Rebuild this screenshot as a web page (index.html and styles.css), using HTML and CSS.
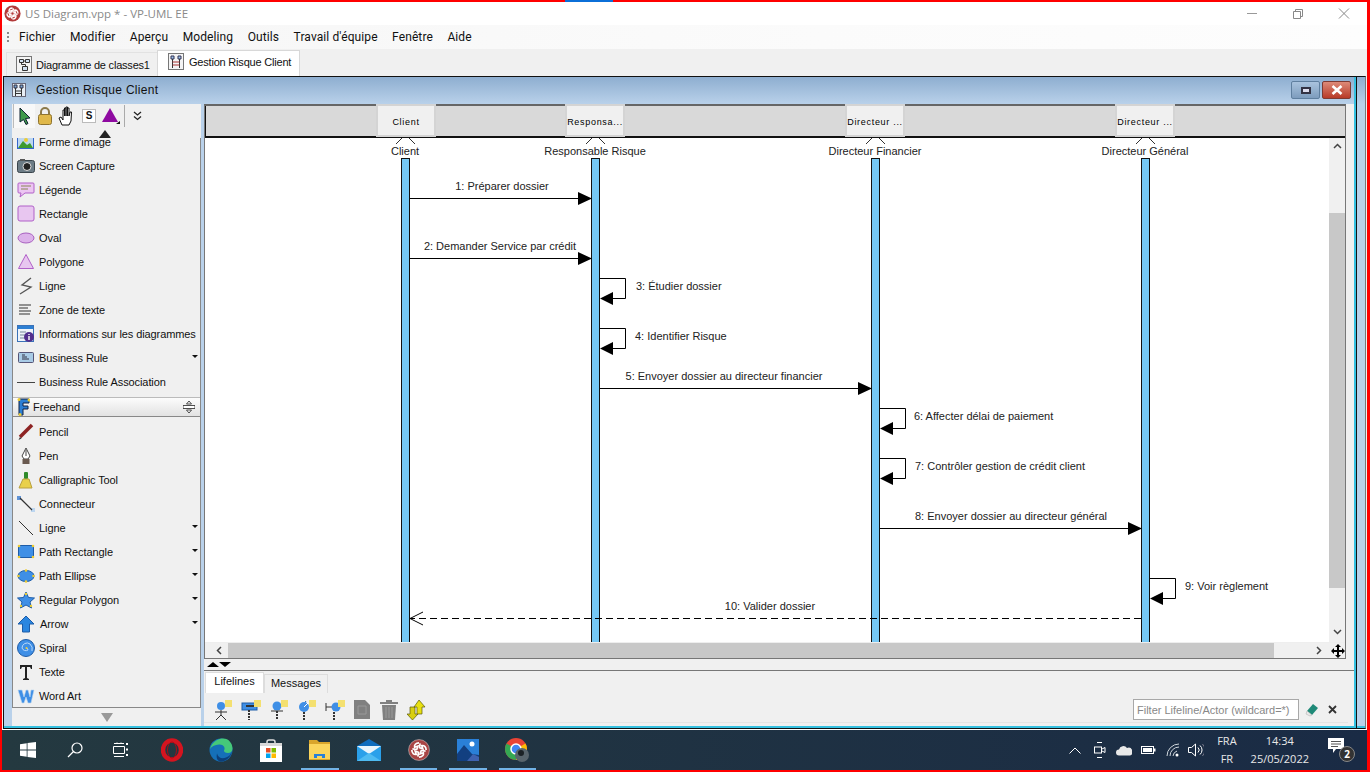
FILE: index.html
```html
<!DOCTYPE html>
<html lang="fr">
<head>
  <meta charset="UTF-8">
  <title>US Diagram.vpp * - VP-UML EE</title>
  <link rel="stylesheet" href="styles.css">
</head>
<body>
<div class="screen">
  <div class="top-mark"></div>

  <div class="titlebar">
    <svg class="app-logo" width="17" height="17" viewBox="0 0 20 20"><circle cx="10" cy="10" r="9.5" fill="#b23a3a"/><path d="M10 3.500c-3 0-4.500 2-4 4l3-1-1 3-4-.5M16.500 10c0-3-2-4.500-4-4l1 3-3-1 .5-4M10 16.500c3 0 4.500-2 4-4l-3 1 1-3 4 .5M3.500 10c0 3 2 4.500 4 4l-1-3 3 1-.5 4" fill="none" stroke="#fff" stroke-width="1.600"/></svg>
    <span class="app-title">US Diagram.vpp * - VP-UML EE</span>
    <div class="win-btns">
      <svg width="46" height="24" viewBox="0 0 46 24"><path d="M18 12.500h10" stroke="#999"/></svg>
      <svg width="46" height="24" viewBox="0 0 46 24"><path d="M18.500 10.500h7v7h-7zM20.500 10.500v-2h7v7h-2" fill="none" stroke="#888"/></svg>
      <svg width="46" height="24" viewBox="0 0 46 24"><path d="M18 7.500l10 10M28 7.500l-10 10" stroke="#888"/></svg>
    </div>
  </div>

  <div class="menubar">
    <span class="grip"></span>
    <span>Fichier</span>
    <span>Modifier</span>
    <span>Aperçu</span>
    <span>Modeling</span>
    <span>Outils</span>
    <span>Travail d'équipe</span>
    <span>Fenêtre</span>
    <span>Aide</span>
  </div>

  <div class="tabbar">
    <div class="doc-tab">
      <svg width="18" height="18" viewBox="0 0 18 18"><rect x=".5" y=".5" width="15" height="16" fill="#f4f4f4" stroke="#777"/><path d="M3.500 3.500h4v3h-4zM9.500 3.500h4v3h-4zM6.500 10.500h5v4h-5z" fill="#cfe0f2" stroke="#333"/><path d="M7.500 5h2M5.500 6.500v2h4v2" fill="none" stroke="#333"/></svg>
      Diagramme de classes1
    </div>
    <div class="doc-tab active">
      <svg width="18" height="18" viewBox="0 0 18 18"><rect x=".5" y=".5" width="15" height="16" fill="#f4f4f4" stroke="#777"/><path d="M3 3h3v3H3zM10 3h3v3h-3z" fill="#9dc3e8" stroke="#335"/><path d="M4.500 6v9M11.500 6v9" stroke="#333"/><path d="M4.500 9h7M4.500 12h7" stroke="#a33"/></svg>
      Gestion Risque Client
    </div>
  </div>

  <div class="window">
    <div class="frame">
      <div class="win-head">
        <svg width="14" height="14" viewBox="0 0 14 14"><rect x=".5" y=".5" width="13" height="13" fill="#e8eef5" stroke="#667"/><path d="M2 2h3v3H2zM8 2h3v3H8z" fill="#7aa6d6" stroke="#334"/><path d="M3.500 5v8M9.500 5v8M3.500 8h6M3.500 10.500h6" stroke="#333"/></svg>
        <span class="win-name">Gestion Risque Client</span>
        <div class="head-btn"><i></i></div>
        <div class="head-btn close">
          <svg width="14" height="10" viewBox="0 0 14 10"><path d="M2.500 1l9 8M11.500 1l-9 8" stroke="#fff" stroke-width="2.600"/></svg>
        </div>
      </div>

      <div class="win-body">
        <div class="palette">
          <div class="pal-tools">
            <div class="tool on"><svg width="14" height="18" viewBox="0 0 14 18"><path d="M2 1l10 10-4.500.5 2.500 5-2 1-2.500-5L2 15z" fill="#3f9a4a" stroke="#123"/></svg></div>
            <svg class="tool t-lock" width="16" height="20" viewBox="0 0 16 20"><path d="M4 9V6a4 4 0 0 1 8 0v3" fill="none" stroke="#8c7a4a" stroke-width="2"/><rect x="1.500" y="8.500" width="13" height="10" rx="2" fill="#e0b84a" stroke="#8f7430"/></svg>
            <svg class="tool t-hand" width="18" height="20" viewBox="0 0 18 20"><path d="M4 19l-3-7 2-1 2 3V4h1.500v6-8H8v8-9h1.500v9-8H11v8l1-4h1.500L13 15l-2 4z" fill="#fff" stroke="#111" stroke-linejoin="round"/></svg>
            <div class="tool snap">S</div>
            <div class="tool shape"><svg width="18" height="18" viewBox="0 0 18 18"><path d="M8 1l8 14H0z" fill="#8e0aa0"/><path d="M14 17l4-3v3z" fill="#111"/></svg></div>
            <svg class="tool more" width="9" height="10" viewBox="0 0 9 10"><path d="M1 1l3.500 3L8 1M1 5.500l3.500 3 3.500-3" fill="none" stroke="#222" stroke-width="1.300"/></svg>
          </div>
          <div class="pal-tri"></div>

          <div class="pal-list">
            <div class="clip-top">
              <div class="pal-item"><svg width="18" height="18" viewBox="0 0 18 18"><rect x=".5" y="2.500" width="16" height="13" fill="#bcd6f0" stroke="#36c"/><path d="M1 15l5-7 4 4 3-2 3 5z" fill="#3d9a30"/><circle cx="9" cy="7" r="2" fill="#ec3"/></svg>Forme d'image</div>
              <div class="pal-item"><svg width="18" height="18" viewBox="0 0 18 18"><rect x=".5" y="3.500" width="17" height="12" rx="2" fill="#6c7c86" stroke="#3a454c"/><rect x="3" y="2" width="5" height="2" fill="#555"/><circle cx="10" cy="9.500" r="4" fill="#222" stroke="#ddd"/></svg>Screen Capture</div>
              <div class="pal-item"><svg width="18" height="18" viewBox="0 0 18 18"><path d="M2 2h14a1 1 0 0 1 1 1v8a1 1 0 0 1-1 1H8l-5 4 1-4H2a1 1 0 0 1-1-1V3a1 1 0 0 1 1-1z" fill="#ecc6f2" stroke="#b060c8"/><path d="M4 5h10M4 8h7" stroke="#885"/></svg>Légende</div>
              <div class="pal-item"><svg width="18" height="18" viewBox="0 0 18 18"><rect x="1" y="1" width="16" height="15" rx="2" fill="#e8c6f0" stroke="#b060c8"/></svg>Rectangle</div>
              <div class="pal-item"><svg width="18" height="18" viewBox="0 0 18 18"><ellipse cx="9" cy="9" rx="8" ry="5" fill="#dcb2ea" stroke="#a860c0"/></svg>Oval</div>
              <div class="pal-item"><svg width="18" height="18" viewBox="0 0 18 18"><path d="M9 1.500l7.500 14h-15z" fill="#e8c6f0" stroke="#b060c8"/></svg>Polygone</div>
              <div class="pal-item"><svg width="18" height="18" viewBox="0 0 18 18"><path d="M14 1L5 8l9 2-11 7" fill="none" stroke="#555" stroke-width="1.300"/></svg>Ligne</div>
              <div class="pal-item"><svg width="18" height="18" viewBox="0 0 18 18"><path d="M2 4h12M2 7h9M2 10h12M2 13h11" stroke="#333" stroke-width="1.200"/></svg>Zone de texte</div>
              <div class="pal-item"><svg width="18" height="18" viewBox="0 0 18 18"><rect x=".5" y=".5" width="16" height="16" fill="#eef3fa" stroke="#3a72b8"/><rect x="1" y="1" width="15" height="3" fill="#2d7fd3"/><path d="M3 7h6M3 10h5M3 13h5" stroke="#789"/><circle cx="12" cy="12" r="5" fill="#52308e"/><path d="M12 11v4M12 9v1" stroke="#fff" stroke-width="1.400"/></svg>Informations sur les diagrammes</div>
              <div class="pal-item"><svg width="18" height="18" viewBox="0 0 18 18"><rect x="1.500" y="3.500" width="15" height="10" rx="1" fill="#a9cbe6" stroke="#557"/><path d="M5 6h3M5 8h5M5 10h7" stroke="#334"/></svg>Business Rule<i class="caret"></i></div>
              <div class="pal-item"><svg width="18" height="18" viewBox="0 0 18 18"><path d="M0 9.500h18" stroke="#444"/></svg>Business Rule Association</div>
            </div>

            <div class="pal-group">
              <svg width="13" height="18" viewBox="0 0 13 18"><path d="M2 1h10v4H6v3h5v3H6v6H2z" fill="#2d7fd3" stroke="#124"/><circle cx="2" cy="1.500" r="1.500" fill="#ec3"/><circle cx="12" cy="2" r="1.500" fill="#ec3"/><circle cx="3" cy="16.500" r="1.500" fill="#ec3"/></svg>
              <span>Freehand</span>
              <svg class="grp-move" width="12" height="12" viewBox="0 0 12 12"><path d="M0 4.500h12v3H0zM6 0l2.500 3h-5zM6 12l2.500-3h-5z" fill="#fff" stroke="#222" stroke-width=".8"/></svg>
            </div>

            <div class="pal-rest">
              <div class="pal-item"><svg width="18" height="18" viewBox="0 0 18 18"><path d="M15 2L3 14" stroke="#8d2323" stroke-width="3.500"/><path d="M3 14l-1.500 3 3-1.500z" fill="#333"/></svg>Pencil</div>
              <div class="pal-item"><svg width="18" height="18" viewBox="0 0 18 18"><path d="M9 1l4 8-2 3H7L5 9z" fill="#fff" stroke="#444"/><path d="M9 3v6" stroke="#444"/><rect x="5.500" y="12" width="7" height="5" fill="#6a5a50"/></svg>Pen</div>
              <div class="pal-item"><svg width="18" height="18" viewBox="0 0 18 18"><rect x="7" y="1" width="4" height="7" rx="1" fill="#2f8a2a"/><path d="M6 8h6l3 9H2z" fill="#e9d04a" stroke="#b9a040"/></svg>Calligraphic Tool</div>
              <div class="pal-item"><svg width="18" height="18" viewBox="0 0 18 18"><rect y="1" width="4" height="4" fill="#5f93d6"/><rect x="14" y="13" width="4" height="4" fill="#bcd6f0"/><path d="M3 3l12 12" stroke="#333" stroke-width="1.200"/></svg>Connecteur</div>
              <div class="pal-item"><svg width="18" height="18" viewBox="0 0 18 18"><path d="M2 2l14 14" stroke="#333"/></svg>Ligne<i class="caret"></i></div>
              <div class="pal-item"><svg width="18" height="18" viewBox="0 0 18 18"><rect x="1.500" y="2.500" width="15" height="12" fill="#3f8fe6" stroke="#1d5ca8"/><g fill="#ec3"><circle cx="2" cy="3" r="1.300"/><circle cx="16" cy="3" r="1.300"/><circle cx="2" cy="14" r="1.300"/><circle cx="16" cy="14" r="1.300"/></g></svg>Path Rectangle<i class="caret"></i></div>
              <div class="pal-item"><svg width="18" height="18" viewBox="0 0 18 18"><ellipse cx="9" cy="9" rx="8" ry="5.500" fill="#3f8fe6" stroke="#1d5ca8"/><g fill="#ec3"><circle cx="1.500" cy="9" r="1.300"/><circle cx="16.500" cy="9" r="1.300"/><circle cx="9" cy="3.500" r="1.300"/><circle cx="9" cy="14.500" r="1.300"/></g></svg>Path Ellipse<i class="caret"></i></div>
              <div class="pal-item"><svg width="18" height="18" viewBox="0 0 18 18"><path d="M9 1l2.500 5.500 6 .5-4.500 4 1.500 6L9 14l-5.500 3L5 11 .5 7l6-.5z" fill="#3f8fe6" stroke="#1d5ca8"/><g fill="#ec3"><circle cx="9" cy="3" r="1.200"/><circle cx="4" cy="15" r="1.200"/><circle cx="14" cy="15" r="1.200"/></g></svg>Regular Polygon<i class="caret"></i></div>
              <div class="pal-item arrow-item"><svg width="18" height="18" viewBox="0 0 18 18"><path d="M9 1l8 8h-4.500v8h-7V9H1z" fill="#2a86e0" stroke="#1d5ca8"/></svg>Arrow<i class="caret"></i></div>
              <div class="pal-item"><svg width="18" height="18" viewBox="0 0 18 18"><circle cx="9" cy="9" r="8.500" fill="#3f8fe6" stroke="#1d5ca8"/><path d="M9 9a2 2 0 0 1 2 2 4 4 0 0 1-6-2 5 5 0 0 1 8-4 7 7 0 0 1 2 7" fill="none" stroke="#b8d8fa"/><circle cx="9.500" cy="9" r="1" fill="#ec3"/></svg>Spiral</div>
              <div class="pal-item"><svg width="18" height="18" viewBox="0 0 18 18"><path d="M3 2h12v4h-1l-1-2h-3v11l2 1v1H6v-1l2-1V4H5L4 6H3z" fill="#222"/></svg>Texte</div>
              <div class="pal-item"><svg width="18" height="18" viewBox="0 0 18 18"><path d="M1 3h4l2 7 2-7h2l2 7 1-7h3l-3 13h-3l-2-6-2 6H5z" fill="#3f8fe6" stroke="#bcd6f0" stroke-width=".6"/></svg>Word Art</div>
            </div>
          </div>

          <div class="pal-down"></div>
        </div>

        <div class="editor">
          <div class="diagram-box">
            <div class="life-header">
              <div class="head-node" style="left: 170px">Client</div>
              <div class="head-node" style="left: 359px">Responsa...</div>
              <div class="head-node" style="left: 639px">Directeur ...</div>
              <div class="head-node" style="left: 909px">Directeur ...</div>
            </div>
            <div class="canvas-row">
              <svg class="diagram" width="1124" height="504" viewBox="205 138 1124 504">
                <g class="stick">
                  <path d="M396 144l6-6M409 138l6 6M586 144l6-6M599 138l6 6M866 144l6-6M879 138l6 6M1136 144l6-6M1149 138l6 6"/>
                </g>
                <g class="names">
                  <text x="405" y="155">Client</text>
                  <text x="595" y="155">Responsable Risque</text>
                  <text x="875" y="155">Directeur Financier</text>
                  <text x="1145" y="155">Directeur Général</text>
                </g>
                <g class="lifeline">
                  <rect x="401.500" y="158.500" width="8" height="490"/>
                  <rect x="591.500" y="158.500" width="8" height="490"/>
                  <rect x="871.500" y="158.500" width="8" height="490"/>
                  <rect x="1141.500" y="158.500" width="8" height="490"/>
                </g>
                <g class="msg">
                  <path d="M410 198.500h168M410 258.500h168M600 388.500h258M880 528.500h248"/>
                  <path d="M600 278.500h25.500v20H612M600 328.500h25.500v20H612M880 408.500h25.500v20H892M880 458.500h25.500v20H892M1150 578.500h25.500v20H1162"/>
                  <path class="dash" d="M1141 618.500H410"/>
                  <path d="M423 612l-13 6.500 13 6.500"/>
                </g>
                <g class="heads">
                  <path d="M592 198.500l-14-6.500v13zM592 258.500l-14-6.500v13zM872 388.500l-14-6.500v13zM1142 528.500l-14-6.500v13z"/>
                  <path d="M600 298.500l13-6.500v13zM600 348.500l13-6.500v13zM880 428.500l13-6.500v13zM880 478.500l13-6.500v13zM1150 598.500l13-6.500v13z"/>
                </g>
                <g class="labels">
                  <text class="mid" x="502" y="190">1: Préparer dossier</text>
                  <text class="mid" x="500" y="250">2: Demander Service par crédit</text>
                  <text x="636" y="290">3: Étudier dossier</text>
                  <text x="635" y="340">4: Identifier Risque</text>
                  <text class="mid" x="724" y="380">5: Envoyer dossier au directeur financier</text>
                  <text x="914" y="420">6: Affecter délai de paiement</text>
                  <text x="915" y="470">7: Contrôler gestion de crédit client</text>
                  <text class="mid" x="1011" y="520">8: Envoyer dossier au directeur général</text>
                  <text x="1185" y="590">9: Voir règlement</text>
                  <text class="mid" x="770" y="610">10: Valider dossier</text>
                </g>
              </svg>
              <div class="vscroll">
                <svg width="9" height="6" viewBox="0 0 9 6"><path d="M1 5l3.500-3.500L8 5" fill="none" stroke="#444" stroke-width="1.500"/></svg>
                <div class="vthumb"></div>
                <svg width="9" height="6" viewBox="0 0 9 6"><path d="M1 1l3.500 3.500L8 1" fill="none" stroke="#444" stroke-width="1.500"/></svg>
              </div>
            </div>
            <div class="hscroll">
              <svg width="6" height="9" viewBox="0 0 6 9"><path d="M5 1L1.500 4.500 5 8" fill="none" stroke="#444" stroke-width="1.500"/></svg>
              <div class="hthumb"></div>
              <svg width="6" height="9" viewBox="0 0 6 9"><path d="M1 1l3.500 3.500L1 8" fill="none" stroke="#444" stroke-width="1.500"/></svg>
              <svg class="corner" width="14" height="14" viewBox="0 0 14 14"><path d="M7 0l3 3H8v3h3V4l3 3-3 3V8H8v3h2l-3 3-3-3h2V8H3v2L0 7l3-3v2h3V3H4z" fill="#000"/></svg>
            </div>
          </div>

          <div class="splitter"><i class="up"></i><i class="down"></i></div>

          <div class="bottom-tabs">
            <div class="b-tab active">Lifelines</div>
            <div class="b-tab">Messages</div>
          </div>

          <div class="bottom-tools">
            <svg class="b-ico" width="20" height="20" viewBox="0 0 20 20"><circle cx="8" cy="6" r="4" fill="#3f8fe6"/><path d="M8 10v5M2 12h12M8 15l-5 5M8 15l5 5" stroke="#333"/><rect x="12" y="0" width="7" height="7" fill="#f4e070"/></svg>
            <svg class="b-ico" width="20" height="20" viewBox="0 0 20 20"><rect x="1" y="3" width="15" height="7" fill="#3f8fe6" stroke="#1d5ca8"/><path d="M5 6h8" stroke="#333" stroke-width="2"/><path d="M8 10v10" stroke="#333" stroke-width="2" stroke-dasharray="2 1"/><rect x="13" y="0" width="7" height="7" fill="#f4e070"/></svg>
            <svg class="b-ico" width="20" height="20" viewBox="0 0 20 20"><circle cx="8" cy="6" r="4.500" fill="#3f8fe6"/><path d="M2 11h12" stroke="#333"/><path d="M8 11v9" stroke="#333" stroke-width="2" stroke-dasharray="2 1"/><rect x="12" y="0" width="7" height="7" fill="#f4e070"/></svg>
            <svg class="b-ico" width="20" height="20" viewBox="0 0 20 20"><path d="M9 1l-2 3" stroke="#1d5ca8"/><circle cx="7" cy="7" r="5" fill="#3f8fe6"/><path d="M7 7l4-4" stroke="#fff"/><path d="M7 12v8" stroke="#333" stroke-width="2" stroke-dasharray="2 1"/><rect x="12" y="0" width="7" height="7" fill="#f4e070"/></svg>
            <svg class="b-ico" width="20" height="20" viewBox="0 0 20 20"><path d="M1 3v8M1 7h6" stroke="#333"/><circle cx="11" cy="7" r="4.500" fill="#3f8fe6"/><path d="M9 12v8" stroke="#333" stroke-width="2" stroke-dasharray="2 1"/><rect x="13" y="0" width="7" height="7" fill="#f4e070"/></svg>
            <svg class="b-ico" width="18" height="21" viewBox="0 0 18 21"><path d="M1 1h11l5 5v14H1z" fill="#808080"/><path d="M5 7h8v8H5z" fill="none" stroke="#999"/></svg>
            <svg class="b-ico" width="20" height="21" viewBox="0 0 20 21"><path d="M1 3h18v2H1zM7 1h6v2H7z" fill="#808080"/><path d="M3 6h14l-1 15H4z" fill="#808080"/><path d="M7 8v11M10 8v11M13 8v11" stroke="#9a9a9a"/></svg>
            <svg class="b-ico" width="20" height="20" viewBox="0 0 20 20"><path d="M3 7h5v7h3l-5.500 6L0 14h3z" fill="#d8cf10" stroke="#5c5a08" stroke-width=".7"/><path d="M12 0l6 7h-3v7h-5V7H7z" fill="#e8e010" stroke="#5c5a08" stroke-width=".7"/></svg>
            <div class="filter">Filter Lifeline/Actor (wildcard=*)</div>
            <svg class="erase" width="14" height="14" viewBox="0 0 14 14"><path d="M8 1l5 4-6 7-5-4z" fill="#1f8a78"/><path d="M2 8l5 4-2 1-4-2z" fill="#e8e8e8" stroke="#aaa" stroke-width=".5"/></svg>
            <svg class="clear" width="9" height="9" viewBox="0 0 9 9"><path d="M1 1l7 7M8 1L1 8" stroke="#333" stroke-width="1.800"/></svg>
          </div>
        </div>
      </div>
    </div>
  </div>

  <div class="taskbar">
    <div class="tb-btn small"><svg width="16" height="16" viewBox="0 0 16 16"><path d="M0 2.200l6.700-1v6.400H0zM7.500 1.100L16 0v7.600H7.500zM0 8.400h6.700v6.400l-6.700-1zM7.500 8.400H16V16l-8.500-1.100z" fill="#fff"/></svg></div>
    <div class="tb-btn small"><svg width="16" height="16" viewBox="0 0 16 16"><circle cx="10" cy="6" r="5" fill="none" stroke="#fff" stroke-width="1.200"/><path d="M6.500 9.500L1 15" stroke="#fff" stroke-width="1.200"/></svg></div>
    <div class="tb-btn small"><svg width="16" height="16" viewBox="0 0 16 16"><path d="M.5 4.500h11v7H.5zM1 1.500h10M1 14.500h10M4 .5v1M8 .5v1" fill="none" stroke="#fff"/><rect x="13" y="1" width="2" height="2" fill="#fff"/><rect x="13" y="6.500" width="2" height="2" fill="#fff"/><rect x="13" y="12" width="2" height="2" fill="#fff"/></svg></div>
    <div class="tb-btn first-app"><svg width="22" height="24" viewBox="0 0 22 24"><ellipse cx="11" cy="12" rx="9" ry="9.500" fill="none" stroke="#d4141f" stroke-width="4.500"/><ellipse cx="11" cy="12" rx="4.500" ry="8" fill="none" stroke="#a50e18" stroke-width="1"/></svg></div>
    <div class="tb-btn"><svg width="24" height="24" viewBox="0 0 24 24"><circle cx="12" cy="12" r="11.500" fill="#1570b8"/><path d="M1 11C3 3 10 .5 14 .5c6 0 9.500 5 9.500 10 0 3-2 4.500-4.500 4.500-3 0-4-1-4-2.500 2-3-1-6.500-5-6C6 7 3 8 1 11z" fill="#45c87a"/><path d="M23 13c-1 6-6 10.500-11 10.500-4 0-5-4-4-8 1 4 5 6 9 4 3-1 5-3 6-6.500z" fill="#0c3f7a"/></svg></div>
    <div class="tb-btn"><svg width="22" height="24" viewBox="0 0 22 24"><path d="M7 6V4a2 2 0 0 1 2-2h4a2 2 0 0 1 2 2v2" fill="none" stroke="#ddd" stroke-width="1.500"/><rect y="5" width="22" height="19" fill="#fff"/><rect y="5" width="22" height="3" fill="#d8d8d8"/><rect x="6" y="10" width="4.500" height="4.500" fill="#e74c25"/><rect x="11.500" y="10" width="4.500" height="4.500" fill="#7fba00"/><rect x="6" y="15.500" width="4.500" height="4.500" fill="#00a4ef"/><rect x="11.500" y="15.500" width="4.500" height="4.500" fill="#ffb900"/></svg></div>
    <div class="tb-btn on"><svg width="22" height="20" viewBox="0 0 22 20"><path d="M0 0h8l2 2h11v18H0z" fill="#d9a52b"/><rect y="4" width="21" height="15" fill="#fbd55c"/><path d="M5 18v-4h11v4h-3v-2H8v2z" fill="#2a80d8"/></svg></div>
    <div class="tb-btn"><svg width="24" height="22" viewBox="0 0 24 22"><path d="M0 7l12-7 12 7v15H0z" fill="#0f6cbd"/><path d="M0 7h24v15H0z" fill="#2aa0ea"/><path d="M0 7l12 8 12-8" fill="#e9f4fc"/><path d="M0 22l12-8 12 8z" fill="#4ebbf2"/></svg></div>
    <div class="tb-btn on"><svg width="22" height="22" viewBox="0 0 20 20"><circle cx="10" cy="10" r="9.500" fill="#a94444" stroke="#ccc" stroke-width=".5"/><path d="M10 3.500c-3 0-4.500 2-4 4l3-1-1 3-4-.5M16.500 10c0-3-2-4.500-4-4l1 3-3-1 .5-4M10 16.500c3 0 4.500-2 4-4l-3 1 1-3 4 .5M3.500 10c0 3 2 4.500 4 4l-1-3 3 1-.5 4" fill="none" stroke="#fff" stroke-width="1.500"/></svg></div>
    <div class="tb-btn on"><svg width="22" height="22" viewBox="0 0 22 22"><rect width="22" height="22" fill="#2a80d8"/><path d="M0 22V15l7-9 8 9 7 1v6z" fill="#123f80"/><path d="M10 22l6-7 6 3v4z" fill="#3f62b0"/><circle cx="15" cy="5" r="2.500" fill="#fff"/></svg></div>
    <div class="tb-btn on"><svg width="24" height="24" viewBox="0 0 24 24"><circle cx="11" cy="11" r="11" fill="#ea4335"/><path d="M11 11L1.500 5.500A11 11 0 0 0 11 22z" fill="#34a853"/><path d="M11 11v11a11 11 0 0 0 9.500-16.500z" fill="#fbbc05"/><circle cx="11" cy="11" r="5" fill="#4285f4" stroke="#fff" stroke-width="1.500"/><circle cx="17" cy="17" r="7" fill="#59656d"/><circle cx="16" cy="15" r="3" fill="#1c2226"/></svg></div>

    <div class="tray">
      <svg width="12" height="7" viewBox="0 0 12 7"><path d="M.5 6.500L6 1l5.500 5.500" fill="none" stroke="#fff"/></svg>
      <svg class="t-meet" width="12" height="16" viewBox="0 0 12 16"><path d="M3 .5h5M3 15.500h5" stroke="#fff"/><rect x=".5" y="5" width="7" height="6" fill="none" stroke="#fff"/><path d="M8 7l3-1.500v5L8 9" fill="none" stroke="#fff"/></svg>
      <svg class="t-cloud" width="16" height="11" viewBox="0 0 16 11"><path d="M3 10.500a3 3 0 0 1 0-6 4.500 4.500 0 0 1 8-1.500 3.500 3.500 0 0 1 3 7.500z" fill="#e8e8e8"/></svg>
      <svg class="t-batt" width="15" height="8" viewBox="0 0 15 8"><rect x=".5" y=".5" width="12" height="7" fill="none" stroke="#fff"/><rect x="2" y="2" width="9" height="4" fill="#fff"/><rect x="13" y="2.500" width="1.500" height="3" fill="#fff"/></svg>
      <svg class="t-wifi" width="14" height="14" viewBox="0 0 14 14"><path d="M1 13A12 12 0 0 1 13 1M4 13a9 9 0 0 1 9-9M7 13a6 6 0 0 1 4-5" fill="none" stroke="#cfd6dc"/><circle cx="11" cy="12" r="1.500" fill="#fff"/></svg>
      <svg class="t-vol" width="16" height="14" viewBox="0 0 16 14"><path d="M.5 4.500h3l4-3.500v12l-4-3.500h-3z" fill="none" stroke="#fff"/><path d="M10 4.500a3.500 3.500 0 0 1 0 5M12 2.500a6 6 0 0 1 0 9" fill="none" stroke="#fff"/><path d="M14.500 1a9 9 0 0 1 0 12" fill="none" stroke="#778"/></svg>
      <div class="lang"><span>FRA</span><span>FR</span></div>
      <div class="clock"><span>14:34</span><span>25/05/2022</span></div>
      <div class="notif">
        <svg width="16" height="15" viewBox="0 0 16 15"><path d="M0 0h16v11H8l-3 4v-4H0z" fill="#fff"/><path d="M3 3.500h10M3 6h10M3 8.500h7" stroke="#555"/></svg>
        <span class="badge">2</span>
      </div>
    </div>
  </div>

</div>
</body>
</html>
```

FILE: styles.css
```css
* {
  box-sizing: border-box;
}
html, body {
  margin: 0;
  padding: 0;
}
body {
  font-family: "Liberation Sans", Arial, sans-serif;
  font-size: 11px;
  color: #111;
  overflow: hidden;
}
svg {
  flex: none;
  display: block;
}
.screen {
  width: 1370px;
  height: 772px;
  border-style: solid;
  border-color: #f00;
  border-width: 2px 3px 2px 2px;
  display: flex;
  flex-direction: column;
  background: #fff;
  position: relative;
}
.top-mark {
  position: absolute;
  top: -2px;
  left: 563px;
  width: 48px;
  height: 2px;
  background: #0b6fd8;
}

/* top of the app */
.titlebar {
  height: 23px;
  display: flex;
  align-items: center;
  padding: 0 0 1px 2px;
  background: #fff;
}
.app-logo {
  margin-right: 4px;
}
.app-title {
  font-family: "Open Sans", sans-serif;
  font-size: 11.5px;
  color: #8a8a8a;
}
.win-btns {
  margin-left: auto;
  display: flex;
}
.menubar {
  height: 24px;
  display: flex;
  align-items: center;
  gap: 14.5px;
  padding: 0 0 1px 17px;
  background: linear-gradient(90deg, #f6f6f6, #fbfbfb 60%, #fdfdfd);
  font-family: Roboto, sans-serif;
  font-size: 12px;
  letter-spacing: .1px;
  position: relative;
}
.grip {
  position: absolute;
  left: 5px;
  top: 7px;
  width: 2px;
  height: 10px;
  background: repeating-linear-gradient(#888 0 2px, transparent 2px 4px);
}
.tabbar {
  height: 27px;
  display: flex;
  align-items: flex-end;
  padding-left: 4px;
  background: #f0f0f0;
}
.doc-tab {
  height: 24px;
  width: 152px;
  display: flex;
  align-items: center;
  gap: 2px;
  padding-left: 9px;
  border: 1px solid #e2e2e2;
  border-bottom: none;
  letter-spacing: -.2px;
}
.doc-tab.active {
  height: 26px;
  width: 143px;
  padding-left: 10px;
  padding-bottom: 3px;
  gap: 3px;
  background: #fff;
  border-color: #d8d8d8;
  margin-left: -1px;
}

/* inner window */
.window {
  height: 653px;
  padding-right: 1px;
  background: #f0f0f0;
}
.frame {
  height: 100%;
  margin-left: 1px;
  border: 1px solid #111;
  border-right: 1px solid #777;
  background: #b9d1ea;
  display: flex;
  flex-direction: column;
  position: relative;
}
.frame::after {
  content: "";
  position: absolute;
  top: 0;
  bottom: 0;
  right: 9px;
  width: 2px;
  background: #35c0e0;
  box-shadow: 1px 0 0 #111;
}
.win-head {
  height: 27px;
  flex: none;
  display: flex;
  align-items: center;
  padding: 0 14px 1px 8px;
  background: linear-gradient(#8eaed0, #b9d1ea);
}
.win-name {
  font-size: 12px;
  letter-spacing: .3px;
  margin-left: 10px;
  color: #111;
}
.head-btn {
  width: 29px;
  height: 18px;
  margin-left: auto;
  border: 1px solid #5f7f9f;
  border-radius: 2px;
  background: linear-gradient(#a9c3de, #7d9cbd);
  display: flex;
  align-items: center;
  justify-content: center;
}
.head-btn i {
  width: 10px;
  height: 7px;
  border: 2px solid #334;
  background: #dde;
}
.head-btn.close {
  margin-left: 2px;
  border-color: #7e3a32;
  background: linear-gradient(#dd8a78, #b83a28);
}
.win-body {
  flex: 1;
  min-height: 0;
  display: flex;
  padding-left: 8px;
  border-bottom: 2px solid #35c0e0;
}

/* left palette */
.palette {
  width: 189px;
  flex: none;
  background: #f0f0f0;
  display: flex;
  flex-direction: column;
  position: relative;
}
.pal-tools {
  height: 26px;
  display: flex;
  align-items: center;
  padding: 0 0 3px 1px;
  flex: none;
}
.tool {
  margin-right: 6px;
}
.tool.on {
  width: 22px;
  height: 24px;
  background: #f8f8f8;
  border-left: 1px solid #bbb;
  display: flex;
  align-items: center;
  justify-content: center;
  margin-right: 2px;
}
.tool.t-lock {
  margin-right: 5px;
}
.tool.snap {
  width: 14px;
  height: 14px;
  border: 1px solid #bbb;
  background: #fff;
  font-weight: bold;
  font-size: 10px;
  line-height: 12px;
  text-align: center;
}
.tool.shape {
  border-right: 1px solid #aaa;
  height: 22px;
  padding-right: 4px;
  margin-right: 8px;
  display: flex;
  align-items: center;
}
.pal-tri {
  height: 8px;
  flex: none;
  margin-left: 87px;
  width: 12px;
  background: #222;
  clip-path: polygon(50% 0, 100% 100%, 0 100%);
}
.pal-list {
  flex: 1;
  min-height: 0;
  border-left: 1px solid #888;
  border-right: 1px solid #888;
  border-bottom: 1px solid #888;
  overflow: hidden;
  display: flex;
  flex-direction: column;
}
.clip-top {
  height: 259px;
  flex: none;
  display: flex;
  flex-direction: column;
  justify-content: flex-end;
  padding-bottom: 3px;
  overflow: hidden;
}
.pal-item {
  height: 24px;
  flex: none;
  display: flex;
  align-items: center;
  gap: 4px;
  padding-left: 4px;
  letter-spacing: -.09px;
  position: relative;
}
.arrow-item {
  gap: 5px;
}
.caret {
  position: absolute;
  right: 2px;
  top: 9px;
  border: 3px solid transparent;
  border-top: 3px solid #111;
  border-bottom: none;
}
.pal-group {
  height: 20px;
  flex: none;
  display: flex;
  align-items: center;
  gap: 3px;
  padding: 0 5px 0 4px;
  background: linear-gradient(#fcfcfc, #e2e2e2);
  border-top: 1px solid #bbb;
  border-bottom: 1px solid #888;
}
.grp-move {
  margin-left: auto;
}
.pal-rest {
  padding-top: 3px;
}
.pal-down {
  height: 18px;
  flex: none;
  display: flex;
  justify-content: center;
  align-items: center;
}
.pal-down::after {
  content: "";
  border: 6px solid transparent;
  border-top: 9px solid #999;
  border-bottom: none;
}

/* editor on the right */
.editor {
  width: 1150px;
  flex: none;
  margin-left: 3px;
  background: #f0f0f0;
  display: flex;
  flex-direction: column;
}
.diagram-box {
  width: 1142px;
  flex: none;
  border: 1px solid #777;
  border-top: 2px solid #666;
  background: #fff;
}
.life-header {
  height: 32px;
  background: #d9d9d9;
  border-bottom: 2px solid #111;
  border-left: 1px solid #111;
  position: relative;
}
.head-node {
  position: absolute;
  top: -2px;
  width: 60px;
  height: 33px;
  line-height: 33px;
  text-align: center;
  background: #f0f0f0;
  border: 2px solid #d4d4d4;
  font-size: 9px;
  letter-spacing: .7px;
  color: #000;
  white-space: nowrap;
  overflow: hidden;
}
.canvas-row {
  height: 504px;
  display: flex;
}
.diagram {
  overflow: hidden;
  background: #fff;
}
.diagram text {
  font-family: "Liberation Sans", Arial, sans-serif;
  font-size: 11px;
  fill: #222;
}
.names text, .diagram text.mid {
  text-anchor: middle;
}
.stick path {
  fill: none;
  stroke: #333;
}
.lifeline rect {
  fill: #75c8f5;
  stroke: #111;
}
.msg path {
  fill: none;
  stroke: #000;
}
.msg .dash {
  stroke-dasharray: 7 4;
}
.heads path {
  fill: #000;
}
.vscroll {
  width: 16px;
  background: #f0f0f0;
  display: flex;
  flex-direction: column;
  align-items: center;
  padding-top: 5px;
}
.vthumb {
  width: 16px;
  height: 375px;
  margin: 64px 0 auto;
  background: #c8c8c8;
}
.vscroll svg:last-child {
  margin-bottom: 7px;
}
.hscroll {
  height: 16px;
  display: flex;
  align-items: center;
  background: #f0f0f0;
  padding-left: 11px;
  border-top: 1px solid #eee;
}
.hthumb {
  width: 1046px;
  height: 15px;
  margin: 0 42px 0 6px;
  background: #c8c8c8;
}
.corner {
  margin-left: 9px;
}
.splitter {
  height: 12px;
  flex: none;
  display: flex;
  align-items: center;
  padding-left: 3px;
  border-bottom: 1px solid #777;
}
.splitter .up, .splitter .down {
  border: 6px solid transparent;
  border-top: none;
  border-bottom: 5px solid #000;
}
.splitter .down {
  border-bottom: none;
  border-top: 5px solid #000;
}
.bottom-tabs {
  height: 22px;
  flex: none;
  display: flex;
  align-items: flex-end;
  padding-left: 1px;
}
.b-tab {
  height: 19px;
  width: 64px;
  text-align: center;
  line-height: 16px;
  border: 1px solid #ddd;
  border-bottom: none;
}
.b-tab.active {
  height: 21px;
  width: 59px;
  background: #fff;
  line-height: 17px;
}
.bottom-tools {
  height: 27px;
  flex: none;
  width: 1144px;
  margin-top: 3px;
  display: flex;
  align-items: center;
  padding: 1px 0 0 9px;
  background: #f0f0f0;
  border-bottom: 1px solid #e4e4e4;
}
.b-ico {
  margin-right: 8px;
}
.filter {
  margin-left: auto;
  width: 166px;
  height: 21px;
  line-height: 20px;
  padding-left: 3px;
  border: 1px solid #a8a8a8;
  background: #fff;
  color: #888;
  white-space: nowrap;
}
.erase {
  margin-left: 6px;
}
.clear {
  margin: 0 11px 0 9px;
}

/* windows taskbar */
.taskbar {
  height: 41px;
  margin-top: auto;
  flex: none;
  display: flex;
  align-items: center;
  padding-left: 3px;
  background: linear-gradient(90deg, #243940, #1a2b45);
  border-top: 1px solid #fff;
}
.tb-btn {
  width: 49.300px;
  height: 100%;
  flex: none;
  display: flex;
  align-items: center;
  justify-content: center;
  position: relative;
}
.tb-btn.small {
  width: 46.500px;
}
.tb-btn.first-app {
  margin-left: 3px;
}
.tb-btn.on::after {
  content: "";
  position: absolute;
  left: 6px;
  right: 6px;
  bottom: 0;
  height: 2px;
  background: #72b3e6;
}
.tray {
  margin-left: auto;
  display: flex;
  align-items: center;
  height: 100%;
  color: #e8e8e8;
  font-family: "Open Sans", sans-serif;
  font-size: 11px;
}
.t-meet {
  margin-left: 13px;
}
.t-cloud {
  margin-left: 10px;
}
.t-batt {
  margin-left: 9px;
}
.t-wifi {
  margin-left: 10px;
}
.t-vol {
  margin-left: 8px;
}
.lang, .clock {
  display: flex;
  flex-direction: column;
  align-items: center;
  gap: 2px;
  line-height: 16px;
}
.lang {
  margin-left: 13px;
}
.clock {
  margin-left: 14px;
}
.notif {
  width: 27px;
  height: 24px;
  margin: 0 12px 0 19px;
  position: relative;
}
.badge {
  position: absolute;
  right: 0;
  bottom: 0;
  width: 16px;
  height: 16px;
  line-height: 14px;
  text-align: center;
  border-radius: 50%;
  background: #333;
  border: 1px solid #888;
  color: #fff;
  font-size: 10px;
  font-weight: bold;
}
```
